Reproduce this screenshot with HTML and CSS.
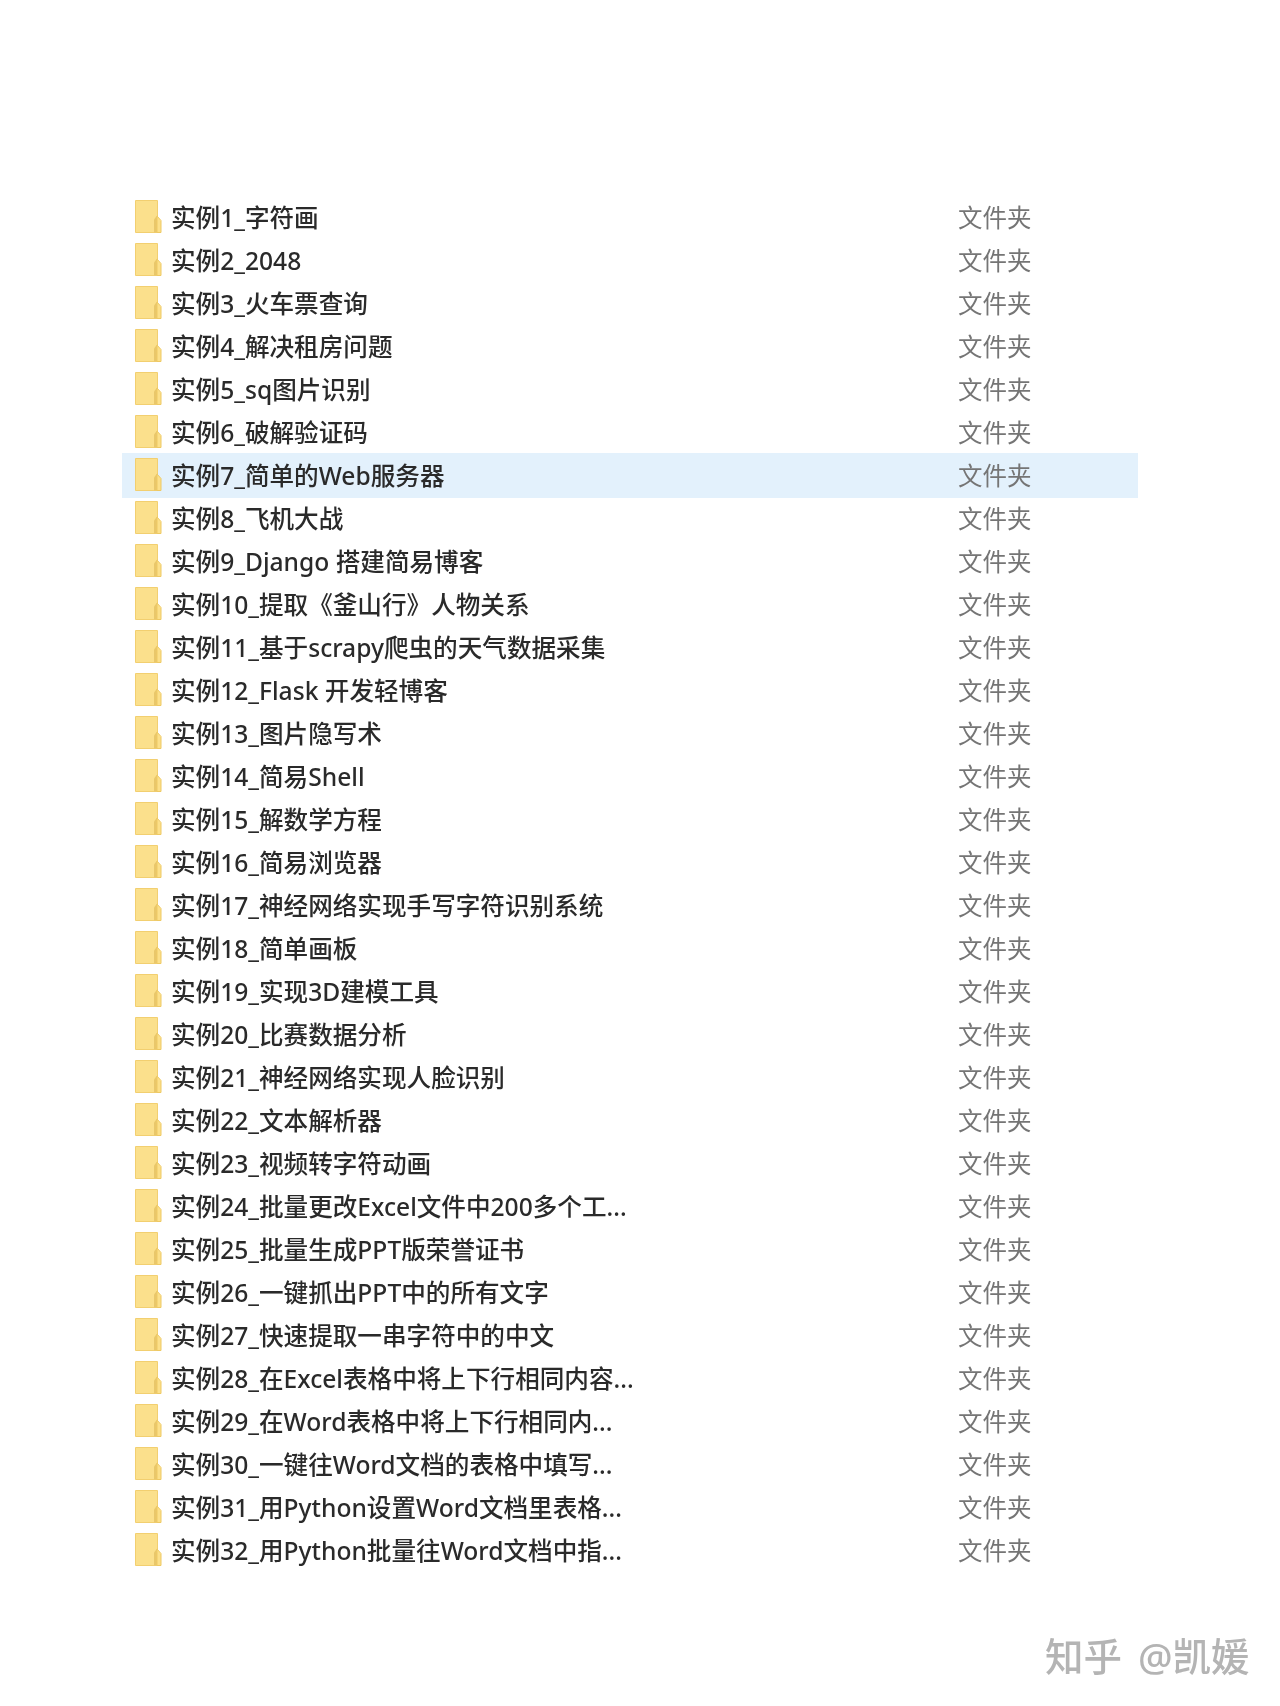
FILE: index.html
```html
<html>
<head>
    <title>实例</title>
    <link rel="stylesheet" href="styles.css">
</head>
<body>
    <svg class="defs" width="0" height="0">
        <symbol id="folder" viewBox="0 0 28 33">
            <path d="M1.5 .5h22v32h-22z" fill="#fbe08c" stroke="#f2cf70"/>
            <path d="M23.5 32.5V15l-3.5 4.5v13z" fill="#e9c76a"/>
            <path d="M23 16l4 4.5v12h-4z" fill="#fce08a" stroke="#eec964"/>
        </symbol>
    </svg>
    <div class="list">
        <div class="row"><svg class="folder"><use href="#folder"/></svg><span class="name">实例1_字符画</span><span class="type">文件夹</span></div>
        <div class="row"><svg class="folder"><use href="#folder"/></svg><span class="name">实例2_2048</span><span class="type">文件夹</span></div>
        <div class="row"><svg class="folder"><use href="#folder"/></svg><span class="name">实例3_火车票查询</span><span class="type">文件夹</span></div>
        <div class="row"><svg class="folder"><use href="#folder"/></svg><span class="name">实例4_解决租房问题</span><span class="type">文件夹</span></div>
        <div class="row"><svg class="folder"><use href="#folder"/></svg><span class="name">实例5_sq图片识别</span><span class="type">文件夹</span></div>
        <div class="row"><svg class="folder"><use href="#folder"/></svg><span class="name">实例6_破解验证码</span><span class="type">文件夹</span></div>
        <div class="row selected"><svg class="folder"><use href="#folder"/></svg><span class="name">实例7_简单的Web服务器</span><span class="type">文件夹</span></div>
        <div class="row"><svg class="folder"><use href="#folder"/></svg><span class="name">实例8_飞机大战</span><span class="type">文件夹</span></div>
        <div class="row"><svg class="folder"><use href="#folder"/></svg><span class="name">实例9_Django 搭建简易博客</span><span class="type">文件夹</span></div>
        <div class="row"><svg class="folder"><use href="#folder"/></svg><span class="name">实例10_提取《釜山行》人物关系</span><span class="type">文件夹</span></div>
        <div class="row"><svg class="folder"><use href="#folder"/></svg><span class="name">实例11_基于scrapy爬虫的天气数据采集</span><span class="type">文件夹</span></div>
        <div class="row"><svg class="folder"><use href="#folder"/></svg><span class="name">实例12_Flask 开发轻博客</span><span class="type">文件夹</span></div>
        <div class="row"><svg class="folder"><use href="#folder"/></svg><span class="name">实例13_图片隐写术</span><span class="type">文件夹</span></div>
        <div class="row"><svg class="folder"><use href="#folder"/></svg><span class="name">实例14_简易Shell</span><span class="type">文件夹</span></div>
        <div class="row"><svg class="folder"><use href="#folder"/></svg><span class="name">实例15_解数学方程</span><span class="type">文件夹</span></div>
        <div class="row"><svg class="folder"><use href="#folder"/></svg><span class="name">实例16_简易浏览器</span><span class="type">文件夹</span></div>
        <div class="row"><svg class="folder"><use href="#folder"/></svg><span class="name">实例17_神经网络实现手写字符识别系统</span><span class="type">文件夹</span></div>
        <div class="row"><svg class="folder"><use href="#folder"/></svg><span class="name">实例18_简单画板</span><span class="type">文件夹</span></div>
        <div class="row"><svg class="folder"><use href="#folder"/></svg><span class="name">实例19_实现3D建模工具</span><span class="type">文件夹</span></div>
        <div class="row"><svg class="folder"><use href="#folder"/></svg><span class="name">实例20_比赛数据分析</span><span class="type">文件夹</span></div>
        <div class="row"><svg class="folder"><use href="#folder"/></svg><span class="name">实例21_神经网络实现人脸识别</span><span class="type">文件夹</span></div>
        <div class="row"><svg class="folder"><use href="#folder"/></svg><span class="name">实例22_文本解析器</span><span class="type">文件夹</span></div>
        <div class="row"><svg class="folder"><use href="#folder"/></svg><span class="name">实例23_视频转字符动画</span><span class="type">文件夹</span></div>
        <div class="row"><svg class="folder"><use href="#folder"/></svg><span class="name">实例24_批量更改Excel文件中200多个工...</span><span class="type">文件夹</span></div>
        <div class="row"><svg class="folder"><use href="#folder"/></svg><span class="name">实例25_批量生成PPT版荣誉证书</span><span class="type">文件夹</span></div>
        <div class="row"><svg class="folder"><use href="#folder"/></svg><span class="name">实例26_一键抓出PPT中的所有文字</span><span class="type">文件夹</span></div>
        <div class="row"><svg class="folder"><use href="#folder"/></svg><span class="name">实例27_快速提取一串字符中的中文</span><span class="type">文件夹</span></div>
        <div class="row"><svg class="folder"><use href="#folder"/></svg><span class="name">实例28_在Excel表格中将上下行相同内容...</span><span class="type">文件夹</span></div>
        <div class="row"><svg class="folder"><use href="#folder"/></svg><span class="name">实例29_在Word表格中将上下行相同内...</span><span class="type">文件夹</span></div>
        <div class="row"><svg class="folder"><use href="#folder"/></svg><span class="name">实例30_一键往Word文档的表格中填写...</span><span class="type">文件夹</span></div>
        <div class="row"><svg class="folder"><use href="#folder"/></svg><span class="name">实例31_用Python设置Word文档里表格...</span><span class="type">文件夹</span></div>
        <div class="row"><svg class="folder"><use href="#folder"/></svg><span class="name">实例32_用Python批量往Word文档中指...</span><span class="type">文件夹</span></div>
    </div>
    <div class="watermark">知乎 @凯媛</div>
</body>
</html>
```

FILE: styles.css
```css
html, body {
    margin: 0;
    padding: 0;
    background: #fff;
}
body {
    position: relative;
    height: 1706px;
    overflow: hidden;
    font-family: "Noto Sans", "Noto Sans CJK SC", sans-serif;
    font-size: 24.6px;
}
.defs { position: absolute; }
.list {
    padding-top: 195px;
    padding-left: 122px;
    width: 1016px;
}
.row {
    display: flex;
    align-items: center;
    height: 43.03px;
    padding-left: 12px;
    filter: blur(0.5px);
}
.row.selected {
    box-sizing: border-box;
    height: 45.03px;
    padding-bottom: 2px;
    margin-bottom: -2px;
    background: #e3f1fc;
}
.folder {
    width: 28px;
    height: 33px;
    flex: none;
}
.name {
    margin-left: 9px;
    padding-bottom: 2px;
    width: 787px;
    color: #2a2a2a;
    font-weight: 500;
    white-space: nowrap;
    flex: none;
}
.type {
    color: #757575;
    font-size: 24.5px;
}
.watermark {
    position: absolute;
    left: 1045px;
    top: 1634px;
    color: #b4b4b4;
    font-size: 38.5px;
    line-height: 44px;
    font-weight: 500;
    word-spacing: 6px;
    white-space: nowrap;
    filter: blur(0.4px);
}
```
